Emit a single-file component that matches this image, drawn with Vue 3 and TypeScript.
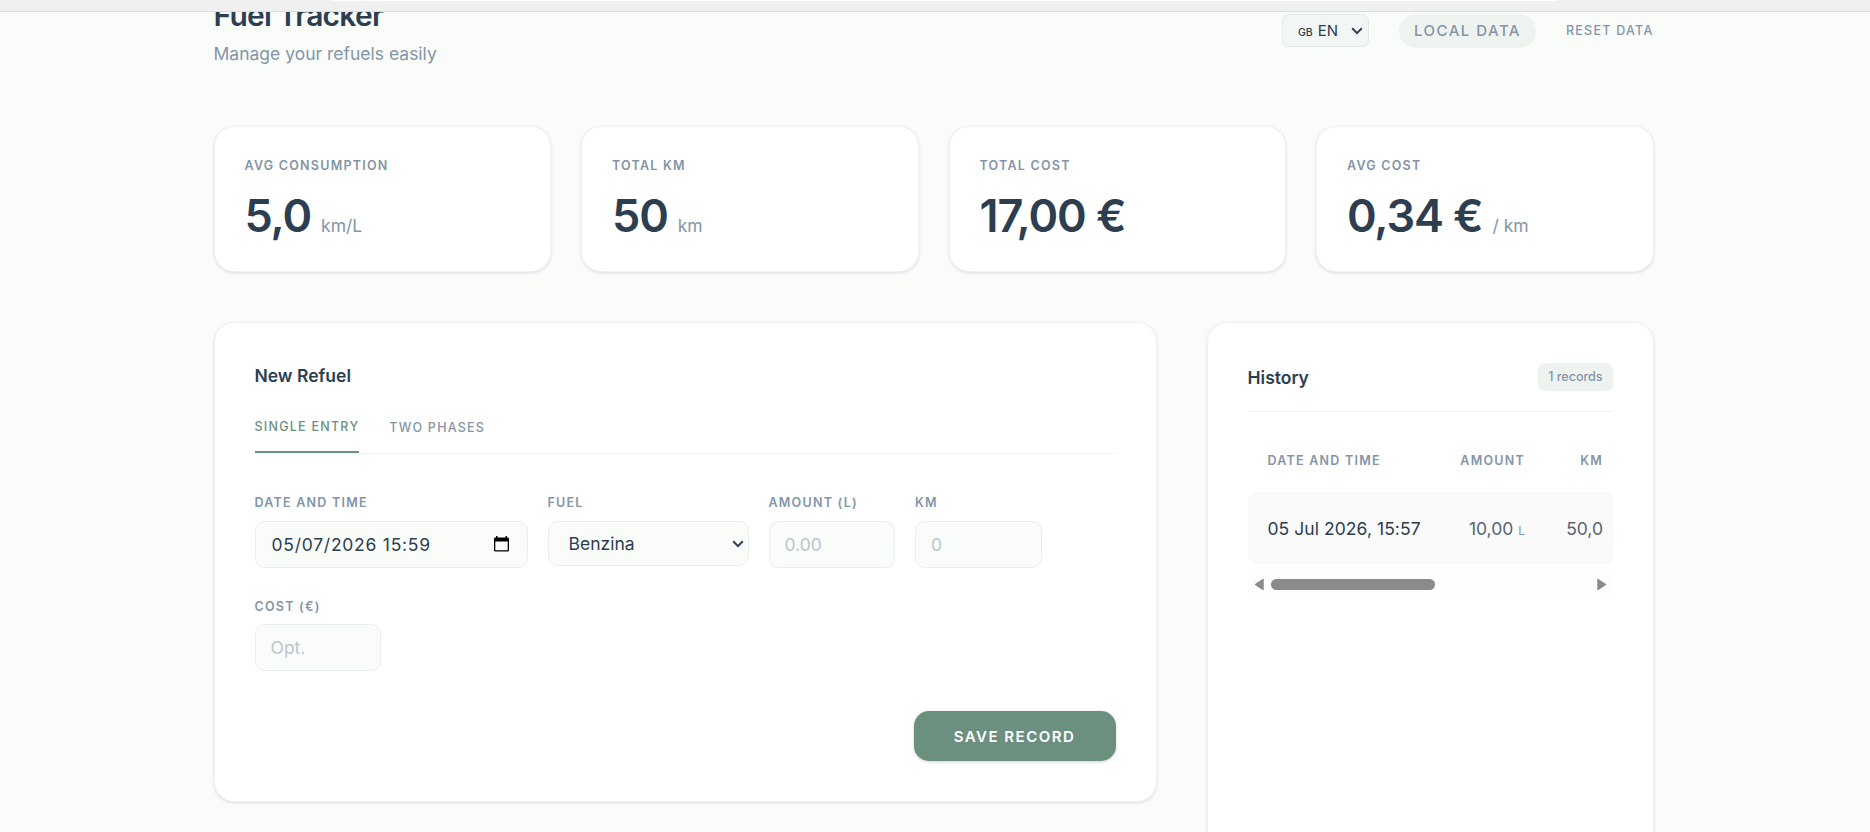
<template>
  <div class="window">
    <div class="browser-bar">
      <div class="address-edge"></div>
    </div>
    <div class="viewport">
      <div class="app">
        <header class="header">
          <div>
            <h1>Fuel Tracker</h1>
            <p class="subtitle">Manage your refuels easily</p>
          </div>
          <div class="actions">
            <div class="lang">
              <span class="flag">GB</span>
              <span class="lang-code">EN</span>
              <svg class="chevron" viewBox="0 0 12 8"><path d="M1.2 1.3 6 6.1l4.8-4.8" /></svg>
            </div>
            <span class="pill">LOCAL DATA</span>
            <button class="reset">RESET DATA</button>
          </div>
        </header>

        <section class="stats">
          <div v-for="stat in stats" :key="stat.label" class="card stat">
            <div class="label">{{ stat.label }}</div>
            <div class="stat-value">
              {{ stat.value }}<span v-if="stat.unit" class="unit">{{ stat.unit }}</span>
            </div>
          </div>
        </section>

        <main class="main">
          <section class="card panel form-panel">
            <h2>New Refuel</h2>
            <nav class="tabs">
              <button
                v-for="tab in tabs"
                :key="tab"
                class="tab"
                :class="{ active: tab === activeTab }"
                @click="activeTab = tab"
              >{{ tab }}</button>
            </nav>
            <div class="fields">
              <div v-for="field in fields" :key="field.label" class="field" :class="field.kind">
                <div class="label">{{ field.label }}</div>
                <div class="input">
                  <span :class="{ placeholder: field.placeholder }">{{ field.text }}</span>
                  <svg v-if="field.kind === 'date'" class="calendar" viewBox="0 0 15 16">
                    <path d="M2 0h1.5v1.5h8V0H13v1.500h.7q1.300 0 1.300 1.300v11.400q0 1.300-1.300 1.300H1.300Q0 15.500 0 14.200V2.800q0-1.300 1.300-1.300H2zM1.300 5.500v8.700h12.400V5.500z" />
                  </svg>
                  <svg v-if="field.kind === 'select'" class="chevron" viewBox="0 0 12 8">
                    <path d="M1.2 1.3 6 6.1l4.8-4.8" />
                  </svg>
                </div>
              </div>
            </div>
            <div class="submit">
              <button class="save">SAVE RECORD</button>
            </div>
          </section>

          <section class="card panel history">
            <div class="history-head">
              <h2>History</h2>
              <span class="badge">{{ records.length }} records</span>
            </div>
            <div class="table">
              <div class="row head label">
                <div>DATE AND TIME</div>
                <div>AMOUNT</div>
                <div>KM</div>
              </div>
              <div v-for="record in records" :key="record.date" class="row record">
                <div class="date-cell">{{ record.date }}</div>
                <div>{{ record.amount }} <small>L</small></div>
                <div>{{ record.km }}</div>
              </div>
            </div>
            <div class="scrollbar">
              <svg class="arrow" viewBox="0 0 10 13"><path d="M9 1.500v10L1.500 6.500z" /></svg>
              <div class="track"><div class="thumb"></div></div>
              <svg class="arrow" viewBox="0 0 10 13"><path d="M1 1.500v10L8.500 6.500z" /></svg>
            </div>
          </section>
        </main>
      </div>
    </div>
  </div>
</template>

<script setup lang="ts">
import { ref } from 'vue'

interface Stat {
  label: string
  value: string
  unit?: string
}

interface Field {
  label: string
  text: string
  kind: 'date' | 'select' | 'number'
  placeholder?: boolean
}

const stats: Stat[] = [
  { label: 'AVG CONSUMPTION', value: '5,0', unit: 'km/L' },
  { label: 'TOTAL KM', value: '50', unit: 'km' },
  { label: 'TOTAL COST', value: '17,00 €' },
  { label: 'AVG COST', value: '0,34 €', unit: '/ km' },
]

const tabs = ['SINGLE ENTRY', 'TWO PHASES']
const activeTab = ref(tabs[0])

const fields: Field[] = [
  { label: 'DATE AND TIME', text: '05/07/2026 15:59', kind: 'date' },
  { label: 'FUEL', text: 'Benzina', kind: 'select' },
  { label: 'AMOUNT (L)', text: '0.00', kind: 'number', placeholder: true },
  { label: 'KM', text: '0', kind: 'number', placeholder: true },
  { label: 'COST (€)', text: 'Opt.', kind: 'number', placeholder: true },
]

const records = [{ date: '05 Jul 2026, 15:57', amount: '10,00', km: '50,0' }]
</script>

<style>
body {
  margin: 0;
  overflow: hidden;
}
</style>

<style scoped>
.window {
  display: flex;
  flex-direction: column;
  height: 832px;
  overflow: hidden;
  background: #fafcfa;
  color: #2c3e50;
  font-family: Inter, sans-serif;
  font-size: 17.5px;
}

.window * {
  box-sizing: border-box;
}

button {
  padding: 0;
  border: 0;
  background: none;
  font-family: inherit;
}

h1,
h2,
p {
  margin: 0;
}

.browser-bar {
  flex: 0 0 12px;
  background: #f0f0f0;
  border-bottom: 1px solid #d9dddb;
}

.address-edge {
  width: 1225px;
  height: 1px;
  margin-left: 331px;
  background: #fff;
}

.viewport {
  flex: 1;
  min-height: 0;
  overflow: hidden;
}

.app {
  width: 1440px;
  margin: -16px auto 0 213.5px;
}

.header {
  display: flex;
  justify-content: space-between;
  align-items: center;
  margin-bottom: 58px;
}

h1 {
  font-size: 30px;
  font-weight: 600;
  line-height: 38px;
  letter-spacing: -0.75px;
}

.subtitle {
  margin-top: 6px;
  line-height: 28px;
  color: #8395a7;
}

.actions {
  display: flex;
  align-items: center;
  margin-bottom: 3px;
}

.lang {
  display: flex;
  align-items: baseline;
  width: 87px;
  height: 33px;
  margin-right: 30px;
  padding: 0 5px 0 15px;
  border: 1px solid #e3ebe6;
  border-radius: 7px;
  background: #f2f6f4;
  font-size: 15px;
  line-height: 31px;
}

.flag {
  margin-right: 5px;
  font-size: 10.5px;
  font-weight: 500;
}

.chevron {
  width: 12px;
  height: 8px;
  margin-left: auto;
  align-self: center;
  fill: none;
  stroke: #2c3e50;
  stroke-width: 2;
}

.pill {
  width: 137px;
  margin-right: 30px;
  border-radius: 17px;
  background: #eff3f0;
  color: #8395a7;
  font-size: 15px;
  font-weight: 500;
  line-height: 34px;
  letter-spacing: 1.5px;
  text-align: center;
}

.reset {
  color: #8395a7;
  font-size: 12.5px;
  font-weight: 500;
  letter-spacing: 1.25px;
}

.card {
  border: 1px solid #eff3f0;
  border-radius: 20px;
  background: #fff;
  box-shadow: 0 1px 3px rgba(44, 62, 80, 0.16);
}

.label {
  color: #8395a7;
  font-size: 12.5px;
  font-weight: 600;
  line-height: 17px;
  letter-spacing: 1.25px;
}

.stats {
  display: grid;
  grid-template-columns: repeat(4, 1fr);
  gap: 30px;
  margin-bottom: 50px;
}

.stat {
  height: 146px;
  padding: 30px;
}

.stat-value {
  margin-top: 15px;
  font-size: 45px;
  font-weight: 600;
  line-height: 54px;
  letter-spacing: -1.125px;
}

.unit {
  margin-left: 10px;
  color: #8395a7;
  font-size: 17.5px;
  font-weight: 400;
  letter-spacing: 0;
}

.main {
  display: flex;
  align-items: flex-start;
  gap: 50px;
}

.panel {
  padding: 40px;
}

.form-panel {
  flex: 0 0 943px;
}

h2 {
  font-size: 17.5px;
  font-weight: 600;
  line-height: 25px;
}

.tabs {
  display: flex;
  align-items: center;
  gap: 30px;
  margin: 29px 0 40px;
  border-bottom: 1px solid #eff3f0;
}

.tab {
  padding-bottom: 14px;
  color: #8395a7;
  font-size: 12.5px;
  font-weight: 500;
  line-height: 20px;
  letter-spacing: 1.25px;
}

.tab.active {
  border-bottom: 2px solid #6b9080;
  color: #6b9080;
}

.fields {
  display: flex;
  flex-wrap: wrap;
  gap: 30px 20px;
}

.field {
  width: 126.5px;
}

.field.date {
  width: 273px;
}

.field.select {
  width: 201px;
}

.input {
  display: flex;
  align-items: center;
  height: 46.9px;
  margin-top: 9.75px;
  padding: 0 15px;
  border: 1px solid #e8eeea;
  border-radius: 10px;
  background: #fafcfa;
}

.date .input {
  padding: 0 18px 0 16px;
  letter-spacing: 0.75px;
}

.select .input {
  height: 45px;
  padding: 1px 4px 0 20px;
}

.placeholder {
  color: #b9c5cc;
}

.calendar {
  width: 15px;
  height: 16px;
  margin-left: auto;
  fill: #000;
  fill-rule: evenodd;
}

.submit {
  display: flex;
  justify-content: flex-end;
  margin-top: 40px;
}

.save {
  width: 202px;
  height: 50px;
  border-radius: 15px;
  background: #6b9080;
  box-shadow: 0 1px 3px rgba(44, 62, 80, 0.25);
  color: #fff;
  font-size: 15px;
  font-weight: 600;
  letter-spacing: 1.5px;
}

.history {
  flex: 1;
  min-width: 0;
  height: 620px;
}

.history-head {
  display: flex;
  justify-content: space-between;
  align-items: center;
  padding-bottom: 20px;
  border-bottom: 1px solid #eff3f0;
}

.badge {
  padding: 0 10px;
  border-radius: 7px;
  background: #eff3f0;
  color: #8395a7;
  font-size: 12.5px;
  font-weight: 500;
  line-height: 28px;
}

.table {
  margin-top: 17px;
  overflow: hidden;
}

.row {
  display: grid;
  grid-template-columns: 180px 117.5px 78px;
  align-items: center;
  width: 375.5px;
  text-align: right;
}

.row > div {
  padding: 0 20px 0 0;
  white-space: nowrap;
}

.row > div:first-child {
  padding: 0 0 0 20px;
  text-align: left;
}

.row.head {
  height: 63px;
}

.record {
  height: 72px;
  border-radius: 10px;
  background: #fafafa;
  color: #566573;
}

.record .date-cell {
  color: #2c3e50;
  letter-spacing: 0.06px;
}

small {
  color: #8395a7;
  font-size: 12px;
}

.scrollbar {
  display: flex;
  align-items: center;
  gap: 7px;
  height: 19px;
  margin-top: 11px;
  padding: 0 6px;
  background: #fdfdfd;
}

.arrow {
  width: 10px;
  height: 13px;
  fill: #8b8b8b;
  stroke: #8b8b8b;
  stroke-width: 1.5;
  stroke-linejoin: round;
}

.track {
  flex: 1;
}

.thumb {
  width: 164px;
  height: 11px;
  border-radius: 5.5px;
  background: #8b8b8b;
}
</style>
